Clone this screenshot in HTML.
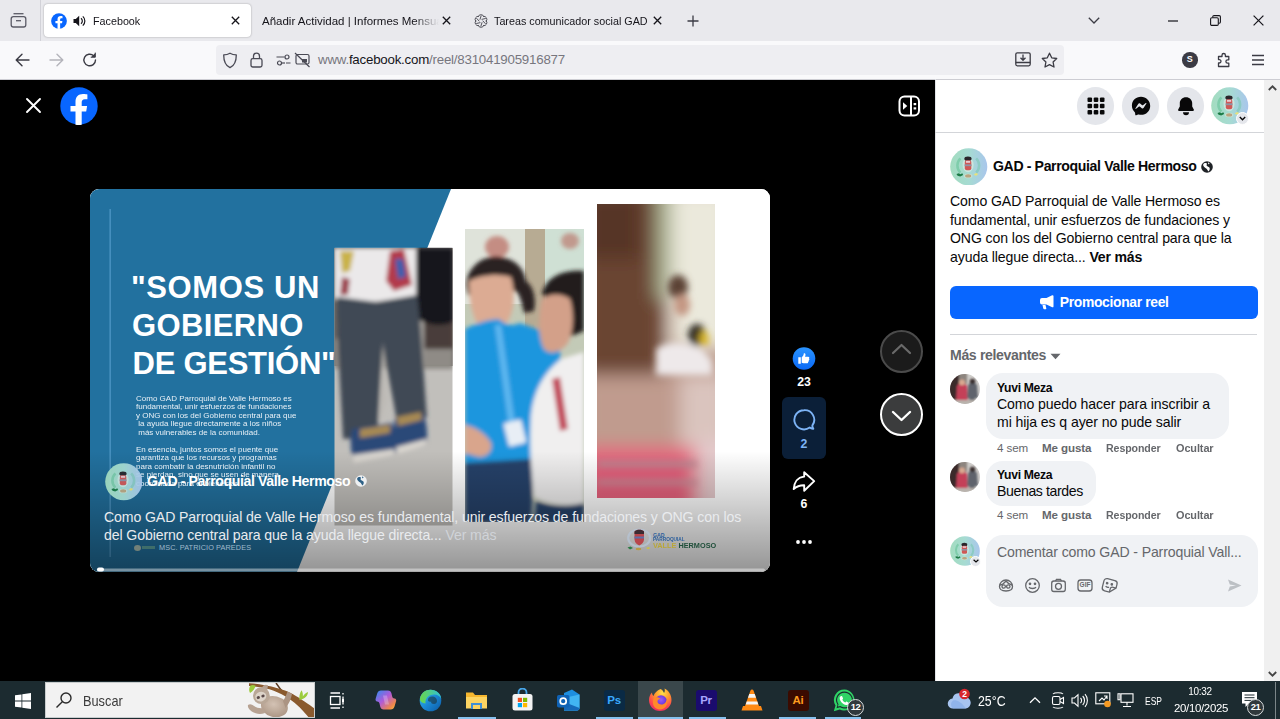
<!DOCTYPE html>
<html lang="es">
<head>
<meta charset="utf-8">
<title>Facebook</title>
<style>
*{box-sizing:border-box;margin:0;padding:0}
html,body{width:1280px;height:719px;overflow:hidden;background:#000;font-family:"Liberation Sans",sans-serif;}
.abs{position:absolute}
#root{position:relative;width:1280px;height:719px;overflow:hidden}
/* ---------- browser chrome ---------- */
#tabbar{left:0;top:0;width:1280px;height:41px;background:#e9e9ed}
#navbar{left:0;top:41px;width:1280px;height:38.600px;background:#f9f9fb;border-bottom:1px solid #cdcdd3}
.tab-active{left:44px;top:4px;width:207px;height:33px;background:#fff;border-radius:4px;box-shadow:0 0 2px rgba(0,0,0,.35)}
.tabtxt{font-size:11.500px;color:#15141a;white-space:nowrap;top:14px;line-height:14px;transform:scaleX(.935);transform-origin:0 0}
#urlbar{left:216px;top:45px;width:848px;height:29.600px;background:#eeeef2;border-radius:4px}
#urltxt{left:318px;top:52px;font-size:13.3px;line-height:16px;color:#77767e;white-space:nowrap;letter-spacing:-0.22px}
#urltxt b{font-weight:normal;color:#15141a}
/* ---------- content ---------- */
#stage{left:0;top:79.600px;width:935px;height:601.400px;background:#000}
#panel{left:935px;top:79.600px;width:329px;height:601.400px;background:#fff}
#scroll{left:1264px;top:79.600px;width:16px;height:601.400px;background:#f0f0f0}

/* ---------- stage ---------- */
.white{color:#fff}
#video{left:90px;top:189px;width:680px;height:383px;border-radius:9px;overflow:hidden;background:#fff}
.hl{font-weight:bold;color:#fff;font-size:31px;line-height:38px;white-space:nowrap}
.small{left:46px;color:#e8f0f6;font-size:7px;line-height:8.450px;white-space:nowrap;transform:scaleX(1.145);transform-origin:0 0}
.cap{left:14px;color:#e9ebee;font-size:14.1px;line-height:18px;white-space:nowrap;letter-spacing:-0.1px}
.cnt{font-size:12.3px;font-weight:bold;color:#fff;text-align:center;width:44px;line-height:14px}

/* ---------- panel ---------- */
.hbtn{width:37.500px;height:37.500px;border-radius:50%;background:#e4e6eb;top:87px}
.ava{border-radius:50%;background:radial-gradient(circle at 50% 42%,#7d5a5e 0 14%,#c9d9c4 16% 34%,#a8d3c0 36% 62%,#8cc3cf 64% 100%)}
.ptxt{left:950px;font-size:14.1px;line-height:18.700px;color:#080809;white-space:nowrap;letter-spacing:-0.1px}
.bub{background:#f0f2f5;border-radius:17px}
.cname{font-size:12.200px;font-weight:bold;color:#080809;white-space:nowrap;line-height:14px;letter-spacing:-0.34px}
.ctext{font-size:14.1px;color:#080809;white-space:nowrap;line-height:18px;letter-spacing:-0.1px}
.act{font-size:11.600px;color:#65676b;white-space:nowrap;line-height:14px;letter-spacing:-0.1px}
.act b{font-weight:bold}
.uava{width:30px;height:30px;border-radius:50%;left:950px;background:radial-gradient(circle at 40% 55%,#c63d54 0 16%,#8a7f78 18% 40%,#6b6a62 42% 70%,#9aa493 72% 100%)}
/* ---------- taskbar ---------- */
#taskbar{left:0;top:681px;width:1280px;height:38px;background:#1c2b30}

.tray{color:#fff;font-size:12px;line-height:14px;white-space:nowrap}
.ul{top:717px;height:2px;background:#86c1ee}
.appsq{width:21px;height:21px;border-radius:3px;top:689.500px;font-weight:bold;font-size:11.500px;line-height:21px;text-align:center;letter-spacing:-0.3px}
</style>
</head>
<body>
<div id="root">

<!-- ======= TAB BAR ======= -->
<div id="tabbar" class="abs"></div>
<div class="abs tab-active"></div>
<div class="abs" style="left:39.500px;top:0;width:1px;height:41px;background:#d2d2d8"></div>
<!-- firefox view icon -->
<svg class="abs" style="left:10px;top:12px" width="17" height="17" viewBox="0 0 17 17" fill="none" stroke="#5b5b66" stroke-width="1.300"><path d="M3.500 1.700h10"/><rect x="1.200" y="4.700" width="14.600" height="10.300" rx="2.200"/><path d="M6 8.700h5"/></svg>
<!-- fb favicon -->
<svg class="abs" style="left:51px;top:12.500px" width="16" height="16" viewBox="0 0 38 38"><circle cx="19" cy="19" r="18.700" fill="#0866ff"/><path d="M26.200 24.600l.9-5.600h-5.400v-3.700c0-1.500.8-3 3.200-3h2.500V7.500s-2.300-.4-4.400-.4c-4.500 0-7.500 2.700-7.500 7.700V19h-5v5.600h5v13.100a19 19 0 0 0 6.200 0V24.600z" fill="#fff"/></svg>
<!-- sound icon -->
<svg class="abs" style="left:73px;top:15px" width="13" height="12" viewBox="0 0 13 12"><path d="M.5 4h2.300L6.200.8v10.400L2.800 8H.5z" fill="#15141a"/><path d="M8 3.200a3.600 3.600 0 0 1 0 5.600M9.800 1.400a6.200 6.200 0 0 1 0 9.200" stroke="#15141a" stroke-width="1.200" fill="none"/></svg>
<!-- tab close x's -->
<svg class="abs" style="left:231px;top:16px" width="9" height="9" viewBox="0 0 9 9"><path d="M.8.800l7.400 7.400M8.200.8L.8 8.200" stroke="#15141a" stroke-width="1.300"/></svg>
<svg class="abs" style="left:442px;top:16px" width="9" height="9" viewBox="0 0 9 9"><path d="M.8.800l7.400 7.400M8.200.8L.8 8.200" stroke="#15141a" stroke-width="1.300"/></svg>
<svg class="abs" style="left:653px;top:16px" width="9" height="9" viewBox="0 0 9 9"><path d="M.8.800l7.400 7.400M8.200.8L.8 8.200" stroke="#15141a" stroke-width="1.300"/></svg>
<!-- chatgpt-like favicon -->
<svg class="abs" style="left:473.500px;top:13.500px" width="14" height="14" viewBox="-7 -7 14 14" fill="none" stroke="#55555d" stroke-width="1"><path d="M-2.90 -4.08A3.0 3.0 0 0 1 2.90 -4.08M0.58 -1.60L4.77 -2.54M2.08 -4.55A3.0 3.0 0 0 1 4.98 0.47M1.67 -0.30L4.58 2.86M4.98 -0.47A3.0 3.0 0 0 1 2.08 4.55M1.09 1.30L-0.19 5.40M2.90 4.08A3.0 3.0 0 0 1 -2.90 4.08M-0.58 1.60L-4.77 2.54M-2.08 4.55A3.0 3.0 0 0 1 -4.98 -0.47M-1.67 0.30L-4.58 -2.86M-4.98 0.47A3.0 3.0 0 0 1 -2.08 -4.55M-1.09 -1.30L0.19 -5.40"/></svg>
<!-- new tab + -->
<svg class="abs" style="left:687px;top:15px" width="12" height="12" viewBox="0 0 12 12"><path d="M6 .5v11M.5 6h11" stroke="#3b3b44" stroke-width="1.300"/></svg>
<!-- list all tabs chevron -->
<svg class="abs" style="left:1088px;top:17px" width="12" height="7" viewBox="0 0 12 7"><path d="M.8.800L6 6l5.200-5.200" stroke="#3b3b44" stroke-width="1.300" fill="none"/></svg>
<!-- window controls -->
<svg class="abs" style="left:1168px;top:20px" width="10" height="2" viewBox="0 0 10 2"><path d="M0 1h10" stroke="#15141a" stroke-width="1.200"/></svg>
<svg class="abs" style="left:1210px;top:15px" width="11" height="11" viewBox="0 0 11 11" fill="none" stroke="#15141a" stroke-width="1.100"><rect x=".6" y="2.700" width="7.700" height="7.700" rx="1.200"/><path d="M2.800 2.500V1.800a1.200 1.200 0 0 1 1.200-1.200h5.200a1.200 1.200 0 0 1 1.200 1.200V7a1.200 1.200 0 0 1-1.200 1.200h-.7"/></svg>
<svg class="abs" style="left:1253px;top:15px" width="11" height="11" viewBox="0 0 11 11"><path d="M.6.600l9.800 9.800M10.400.6L.6 10.400" stroke="#15141a" stroke-width="1.200"/></svg>
<div class="abs tabtxt" id="t1" style="left:93px">Facebook</div>
<div class="abs tabtxt" id="t2" style="left:262px;width:177px;overflow:hidden;transform:none;letter-spacing:0;-webkit-mask-image:linear-gradient(90deg,#000 0,#000 86%,transparent 100%);mask-image:linear-gradient(90deg,#000 0,#000 86%,transparent 100%)">Añadir Actividad | Informes Mensuales</div>
<div class="abs tabtxt" id="t3" style="left:494px;width:170px;overflow:hidden">Tareas comunicador social GAD</div>

<!-- ======= NAV BAR ======= -->
<div id="navbar" class="abs"></div>
<div id="urlbar" class="abs"></div>
<!-- back / forward / reload -->
<svg class="abs" style="left:15px;top:53px" width="15" height="14" viewBox="0 0 15 14" fill="none" stroke="#3b3b44" stroke-width="1.400" stroke-linecap="round" stroke-linejoin="round"><path d="M14 7H1.500M7 1.200L1.200 7 7 12.800"/></svg>
<svg class="abs" style="left:49px;top:53px" width="15" height="14" viewBox="0 0 15 14" fill="none" stroke="#b4b4bb" stroke-width="1.400" stroke-linecap="round" stroke-linejoin="round"><path d="M1 7h12.500M8 1.200L13.800 7 8 12.800"/></svg>
<svg class="abs" style="left:82px;top:52px" width="16" height="16" viewBox="0 0 16 16" fill="none" stroke="#3b3b44" stroke-width="1.400" stroke-linecap="round"><path d="M13.500 8a5.800 5.800 0 1 1-1.800-4.200"/><path d="M13.300 1v4.200H9.100" fill="#3b3b44" stroke-linejoin="round" stroke-width="1"/></svg>
<!-- shield, lock, permissions, pip -->
<svg class="abs" style="left:222px;top:52px" width="16" height="17" viewBox="0 0 16 17" fill="none" stroke="#4a4a55" stroke-width="1.300"><path d="M8 1.200c2 1.200 4 1.700 6.300 1.700 0 5.600-1.300 10.300-6.300 12.800C3 13.200 1.700 8.500 1.700 2.900 4 2.900 6 2.400 8 1.200z" stroke-linejoin="round"/></svg>
<svg class="abs" style="left:250px;top:52px" width="13" height="16" viewBox="0 0 13 16" fill="none" stroke="#4a4a55" stroke-width="1.300"><rect x="1" y="6.700" width="11" height="8.300" rx="1.800"/><path d="M3.500 6.700V4.200a3 3 0 0 1 6 0v2.500"/></svg>
<svg class="abs" style="left:276px;top:54px" width="15" height="12" viewBox="0 0 15 12" fill="none" stroke="#4a4a55" stroke-width="1.200"><path d="M.5 3h8M10 9h4.500"/><circle cx="11" cy="3" r="2"/><circle cx="3.500" cy="9" r="2"/><path d="M5.500 9H9" /></svg>
<svg class="abs" style="left:294px;top:52px" width="17" height="16" viewBox="0 0 17 16" fill="none" stroke="#4a4a55" stroke-width="1.200"><rect x="2" y="2.500" width="13" height="9.500" rx="1.500"/><rect x="8" y="7" width="5" height="3.500" fill="#4a4a55" stroke="none"/><path d="M1 1l14.500 14"/></svg>
<!-- right side: downloads-ish + star -->
<svg class="abs" style="left:1015px;top:52px" width="16" height="15" viewBox="0 0 16 15" fill="none" stroke="#3b3b44" stroke-width="1.300"><rect x=".8" y=".8" width="14.400" height="13" rx="1.500"/><path d="M.8 10.500h14.400M8 2.500v5.500M5.500 5.800L8 8.300l2.500-2.500" stroke-linejoin="round"/></svg>
<svg class="abs" style="left:1041px;top:51.500px" width="17" height="16" viewBox="0 0 17 16" fill="none" stroke="#3b3b44" stroke-width="1.300" stroke-linejoin="round"><path d="M8.500 1.200l2.200 4.600 5 .7-3.600 3.500.9 5-4.500-2.400L4 15l.9-5L1.300 6.500l5-.7z"/></svg>
<!-- account S, extensions, menu -->
<div class="abs" style="left:1182px;top:52px;width:15.500px;height:15.500px;border-radius:50%;background:#3b3b44"></div>
<div class="abs" style="left:1182px;top:52px;width:15.500px;height:15.500px;text-align:center;font-size:9px;line-height:15.500px;font-weight:bold;color:#fff">S</div>
<svg class="abs" style="left:1216px;top:52px" width="16" height="16" viewBox="0 0 16 16" fill="none" stroke="#3b3b44" stroke-width="1.300" stroke-linejoin="round"><path d="M6 3.200a1.700 1.700 0 0 1 3.400 0V4.500h3.400v3.300h-1.200a1.700 1.700 0 0 0 0 3.400h1.200v3.300H2.500V11h.8a1.700 1.700 0 0 0 0-3.400h-.8V4.500H6z"/></svg>
<svg class="abs" style="left:1252px;top:54px" width="12" height="12" viewBox="0 0 12 12"><path d="M0 1.500h12M0 6h12M0 10.500h12" stroke="#3b3b44" stroke-width="1.300"/></svg>
<div id="urltxt" class="abs">www.<b>facebook.com</b>/reel/831041905916877</div>

<!-- ======= STAGE ======= -->
<div id="stage" class="abs"></div>
<!-- close X -->
<svg class="abs" style="left:25px;top:97px" width="17" height="17" viewBox="0 0 17 17"><path d="M2 2 L15 15 M15 2 L2 15" stroke="#fff" stroke-width="1.9" stroke-linecap="round"/></svg>
<!-- facebook logo -->
<svg class="abs" style="left:60px;top:87px" width="38" height="38" viewBox="0 0 38 38"><circle cx="19" cy="19" r="18.7" fill="#0866ff"/><path d="M26.2 24.6l.9-5.6h-5.4v-3.7c0-1.5.8-3 3.200-3h2.500V7.500s-2.300-.4-4.400-.4c-4.500 0-7.500 2.700-7.500 7.700V19h-5v5.600h5v13.100a19 19 0 0 0 6.200 0V24.600z" fill="#fff"/></svg>
<!-- side toggle icon -->
<svg class="abs" style="left:898px;top:95px" width="22" height="22" viewBox="0 0 22 22"><rect x="1.500" y="1.500" width="19.500" height="19" rx="5" fill="none" stroke="#fff" stroke-width="2"/><path d="M13 1.500v19" stroke="#fff" stroke-width="2"/><path d="M5 7.300l4.300 3.700-4.300 3.700z" fill="#fff"/><rect x="15.600" y="8" width="2.600" height="2.200" fill="#fff"/><rect x="15.600" y="12.300" width="2.600" height="2.200" fill="#fff"/></svg>

<!-- ======= VIDEO ======= -->
<div id="video" class="abs">
  <svg class="abs" style="left:0;top:0" width="680" height="383" viewBox="0 0 680 383">
    <defs>
      <filter id="b1" x="-20%" y="-20%" width="140%" height="140%"><feGaussianBlur stdDeviation=".5"/></filter>
      <filter id="b2" x="-20%" y="-20%" width="140%" height="140%"><feGaussianBlur stdDeviation="2"/></filter>
      <filter id="b4" x="-20%" y="-20%" width="140%" height="140%"><feGaussianBlur stdDeviation="3.500"/></filter>
      <filter id="b5" x="-20%" y="-20%" width="140%" height="140%"><feGaussianBlur stdDeviation="5"/></filter>
      <filter id="b9" x="-30%" y="-30%" width="160%" height="160%"><feGaussianBlur stdDeviation="9"/></filter>
      <clipPath id="c1"><rect x="244.500" y="58.500" width="118" height="278"/></clipPath>
      <clipPath id="c2"><rect x="375" y="40" width="119" height="293"/></clipPath>
      <clipPath id="c3"><rect x="507" y="15" width="118" height="294"/></clipPath>
      <linearGradient id="shade" x1="0" y1="0" x2="0" y2="1"><stop offset="0" stop-color="#000" stop-opacity="0"/><stop offset="1" stop-color="#000" stop-opacity=".42"/></linearGradient>
    </defs>
    <rect width="680" height="383" fill="#fff"/>
    <polygon points="0,0 361,0 207,383 0,383" fill="#22719f"/>
    <rect x="19.500" y="20" width="1.300" height="348" fill="#4f97c6"/>
    <!-- photo 1 : child legs -->
    <g clip-path="url(#c1)">
      <rect x="244" y="59" width="119" height="278" fill="#c1bfbb"/>
      <rect x="244" y="59" width="119" height="118" fill="#6d6661"/>
      <g filter="url(#b2)">
        <rect x="244" y="150" width="119" height="30" fill="#8f8b86"/>
        <rect x="318" y="108" width="16" height="72" fill="#a5a19c"/>
        <rect x="334" y="120" width="29" height="40" fill="#4a3c3a"/>
        <path d="M322 59h41v74c-14 6-30 2-38-6z" fill="#17181c"/>
        <path d="M244 59h82v48l-42 6-40-3z" fill="#ebe9ea"/>
        <path d="M300 62l14-2 8 36-18 6-8-10z" fill="#b23a4c"/>
        <path d="M305 70l8 0 3 18-8 2z" fill="#3a5fae"/>
        <path d="M250 62l14 0-4 20-8 2z" fill="#c9b24a"/>
        <path d="M252 88l8 2-2 16-8 0z" fill="#9c3f4c"/>
        <path d="M247 108l40 5 40-7c4 30 6 70 10 122l-30 6c-4-26-10-52-14-76-3 30-4 62-6 90l-34 2c-2-46-6-92-6-142z" fill="#414955"/>
        <path d="M293 152l4 60-8 24z" fill="#bdbab5"/>
        <path d="M262 240l40-6c4 10 4 22 2 32l-40 6c-4-10-4-22-2-32z" fill="#2b4878"/>
        <path d="M305 230l28-6c4 10 5 22 3 32l-30 8c-3-10-3-22-1-34z" fill="#2b4878"/>
        <path d="M270 240l30-4 0 8-30 5zM307 228l24-5 1 8-24 6z" fill="#a88a52"/>
        <path d="M262 266l42-6 0 6-40 8zM306 258l30-8 0 6-29 9z" fill="#d9d5cf"/>
      </g>
    </g>
    <!-- photo 2 : two women -->
    <g clip-path="url(#c2)">
      <rect x="375" y="40" width="119" height="294" fill="#c3cab7"/>
      <rect x="375" y="40" width="60" height="75" fill="#dfe3da"/>
      <rect x="435" y="40" width="20" height="120" fill="#b7ab93"/>
      <rect x="455" y="40" width="39" height="100" fill="#cfe0d4"/>
      <g filter="url(#b2)">
        <ellipse cx="407" cy="58" rx="12" ry="11" fill="#b86a5e" opacity=".7"/>
        <ellipse cx="480" cy="52" rx="9" ry="8" fill="#b86a5e" opacity=".6"/>
        <path d="M376 96c2-20 18-30 34-28 16 2 24 12 26 24 8 6 10 18 8 30l-10 2c-2-10-4-18-8-22l-48 4z" fill="#2a2122"/>
        <path d="M379 92c10-6 30-8 42-4 4 14 4 30-2 42-6 10-16 14-24 12-10-4-16-24-16-50z" fill="#dcab93"/>
        <path d="M375 140c12-6 24-10 34-10 6 6 14 8 20 4 14 4 28 10 40 18 4 30 2 80-6 122l-88 6z" fill="#1b96de"/>
        <path d="M405 136l6 0 14 100-6 2z" fill="#5fb8f0"/>
        <rect x="416" y="232" width="18" height="24" rx="2" fill="#e8eef5" transform="rotate(-14 425 244)"/>
        <path d="M375 236c10 2 20 8 26 18 2 8-4 14-12 14l-14-4z" fill="#d9a58c"/>
        <path d="M375 274l66-4c2 20 2 44 0 64h-66z" fill="#25426b"/>
        <path d="M452 104c4-14 18-24 42-22v60l-20 8z" fill="#241f1e"/>
        <path d="M452 110c8-6 20-6 28 0 4 14 4 30-2 44-8 10-18 12-24 6-6-12-6-32-2-50z" fill="#d3a089"/>
        <path d="M441 226c2-22 12-42 30-56l23-7v151c-16 4-36 2-50-6-3-28-5-55-3-82z" fill="#f0efef"/>
        <path d="M462 190l8-2 8 52-8 2z" fill="#c24b5c"/>
        <path d="M446 312c16 6 34 6 48 2v20h-50z" fill="#25426b"/>
      </g>
    </g>
    <!-- photo 3 : blurred -->
    <g clip-path="url(#c3)">
      <rect x="507" y="15" width="118" height="294" fill="#bb9a8c"/>
      <g filter="url(#b9)">
        <rect x="490" y="0" width="84" height="200" fill="#6b4433"/>
        <rect x="490" y="0" width="60" height="70" fill="#573628"/>
        <rect x="566" y="0" width="20" height="110" fill="#a9b08f"/>
        <rect x="582" y="0" width="60" height="160" fill="#ebe9dc"/>
        <rect x="490" y="186" width="150" height="80" fill="#c09b8e"/>
        <rect x="590" y="186" width="50" height="80" fill="#dac4be"/>
        <rect x="490" y="258" width="150" height="70" fill="#e5607b"/>
        <rect x="606" y="250" width="40" height="80" fill="#e3c9cb"/>
      </g>
      <g filter="url(#b4)">
        <ellipse cx="588" cy="98" rx="10" ry="12" fill="#5b4234"/>
        <ellipse cx="592" cy="116" rx="8" ry="11" fill="#c49783"/>
        <ellipse cx="607" cy="146" rx="9" ry="11" fill="#2f2a22"/>
        <ellipse cx="614" cy="150" rx="5" ry="8" fill="#d8b62c"/>
        <path d="M566 160c10-8 30-8 46 0l10 12v14h-56z" fill="#eee9ea"/>
        <rect x="507" y="272" width="100" height="6" fill="#b98a93"/>
        <rect x="507" y="291" width="100" height="5" fill="#c58e98"/>
      </g>
    </g>
    <!-- bottom shade -->
    <rect x="0" y="262" width="680" height="121" fill="url(#shade)"/>
    <!-- gad logo bottom right -->
    <g filter="url(#b1)"><ellipse cx="549.200" cy="349" rx="11" ry="8.500" fill="none" stroke="#b5c3d3" stroke-width="2.200" opacity=".8"/><path d="M544.500 342.500c2-2.500 7.500-2.500 9.500 0v8c0 3-2.500 5-4.800 6-2.300-1-4.700-3-4.700-6z" fill="#b8444c"/><path d="M544.500 342.500c2-2.500 7.500-2.500 9.500 0v2.500h-9.500z" fill="#3a2a30"/><rect x="544.500" y="347.500" width="9.500" height="2" fill="#5a6fa8"/><path d="M537.500 358.500l3-1 2.500 1.500-3 1.500z" fill="#2c7a45"/><ellipse cx="548.500" cy="360" rx="2.800" ry="1.300" fill="#b89a45"/><path d="M556 359l2.500-1 2 1-2.500 1.200z" fill="#c9c04a"/></g>
    <!-- progress -->
    <rect x="7" y="379.500" width="668" height="3" rx="1.500" fill="#fff" opacity=".42"/>
    <rect x="7" y="378.500" width="7" height="4" rx="2" fill="#fff"/>
  </svg>
  <div class="abs hl" id="h1" style="left:41px;top:79.500px;letter-spacing:.6px">"SOMOS UN</div>
  <div class="abs hl" id="h2" style="left:42px;top:117.500px;letter-spacing:.38px">GOBIERNO</div>
  <div class="abs hl" id="h3" style="left:42.500px;top:156px;letter-spacing:-.26px">DE GESTIÓN"</div>
  <div class="abs small" style="top:206px">Como GAD Parroquial de Valle Hermoso es<br>fundamental, unir esfuerzos de fundaciones<br>y ONG con los del Gobierno central para que<br>&nbsp;la ayuda llegue directamente a los niños<br>&nbsp;más vulnerables de la comunidad.</div>
  <div class="abs small" style="top:257px">En esencia, juntos somos el puente que<br>garantiza que los recursos y programas<br>para combatir la desnutrición infantil no<br>se pierdan, sino que se usen de manera<br>coordinada para el bienestar</div>
  <div class="abs" style="left:44px;top:355.500px;width:7px;height:6px;border-radius:50%;background:#8b8f7c;opacity:.8"></div><div class="abs" style="left:52px;top:357px;width:13px;height:3px;background:#5f8a6a;opacity:.55"></div>
  <div class="abs" style="left:69px;top:354px;font-size:7.3px;color:#9fb9cb;white-space:nowrap;letter-spacing:.1px">MSC. PATRICIO PAREDES</div>
  <div class="abs" id="lg1" style="left:563px;top:343.900px;font-size:5.200px;line-height:4.600px;font-weight:bold;color:#2c5f9c;white-space:nowrap;transform-origin:0 0"><span id="lg1a">GAD</span><br><span id="lg1b" style="display:inline-block;transform:scaleX(.92);transform-origin:0 0">PARROQUIAL</span></div>
  <div class="abs" id="lg2" style="left:563px;top:352.500px;font-size:6.800px;line-height:8px;font-weight:bold;color:#1f4f3a;white-space:nowrap;transform-origin:0 0;transform:scaleX(1.075)"><span style="color:#b9a738">VALLE</span> HERMOSO</div>
  <!-- overlay author -->
  <svg class="abs" style="left:14.5px;top:274px;opacity:.93" width="37.5" height="37.5" viewBox="0 0 38 38"><defs><linearGradient id="gdg" x1="0" y1="0" x2="1" y2="0"><stop offset="0" stop-color="#a3dcbf"/><stop offset=".5" stop-color="#a6dbd2"/><stop offset="1" stop-color="#a9c6ec"/></linearGradient><filter id="gdf"><feGaussianBlur stdDeviation=".45"/></filter></defs><circle cx="19" cy="19" r="18.800" fill="url(#gdg)"/><g filter="url(#gdf)"><path d="M10.500 10.500c-4 4-4 10.500 0 14.500" stroke="#7fcdab" stroke-width="2.600" fill="none"/><path d="M26.500 10.500c4 4 4 10.500 0 14.500" stroke="#8ccbc4" stroke-width="2.600" fill="none"/><ellipse cx="18.300" cy="17" rx="5.600" ry="7.600" fill="#d5ebe3" opacity=".75"/><ellipse cx="18.200" cy="11" rx="3.700" ry="2.300" fill="#2b2529"/><rect x="15" y="12.300" width="6.600" height="10.200" rx="2" fill="#cf5957"/><rect x="14.800" y="16.600" width="7" height="1.800" fill="#8f93a6"/><rect x="16.200" y="13" width="4.200" height="2" fill="#e9c9cf"/><path d="M6.500 26.300l2.500-.8 1.500 1 2-1 .8 1.800-3 1.500-2.600-.8z" fill="#1c7a45"/><ellipse cx="18.400" cy="28.300" rx="3.100" ry="1.600" fill="#8d6d3c"/><ellipse cx="18.400" cy="28.300" rx="4.300" ry="2.300" fill="#efe9d2" opacity=".45"/><path d="M24 27l2.300-1.600 2.400 1-2.200 1.700z" fill="#e8e27a"/></g></svg>
  <div class="abs" style="left:57px;top:284px;font-size:14.1px;line-height:17px;font-weight:bold;color:#fff;white-space:nowrap;letter-spacing:-0.38px" id="ovname">GAD - Parroquial Valle Hermoso</div>
  <svg class="abs" style="left:265px;top:286px" width="12" height="12" viewBox="0 0 12 12"><circle cx="6" cy="6" r="5.800" fill="#eef0f2"/><path d="M2.200 3.200C3 1.800 5 1.600 5.800 2.400 6.200 3 5.400 3.600 5.600 4.400 5.800 5.200 7.600 5.400 8.400 6.400 9.200 7.600 8.600 9.400 7.600 10.400 7 10 6.600 9 6 8.200 5.200 7.200 3.600 6.800 2.800 5.600 2.200 4.800 2 4 2.200 3.200zM7 1.300C7.500 1.900 7.300 2.600 6.800 3.100 7.600 3.300 8.300 2.900 8.600 2.200z" fill="#2e6186"/></svg>
  <div class="abs cap" style="top:319px" id="cap1">Como GAD Parroquial de Valle Hermoso es fundamental, unir esfuerzos de fundaciones y ONG con los</div>
  <div class="abs cap" style="top:337px" id="cap2">del Gobierno central para que la ayuda llegue directa... <span style="color:#d0d3d8">Ver más</span></div>
</div>

<!-- like -->
<svg class="abs" style="left:792px;top:347px" width="24" height="24" viewBox="0 0 24 24"><defs><linearGradient id="lk" x1="0" y1="0" x2="0" y2="1"><stop offset="0" stop-color="#2a94ff"/><stop offset="1" stop-color="#0a68f5"/></linearGradient></defs><circle cx="12" cy="11.500" r="11.300" fill="url(#lk)"/><path d="M6.300 10.300h2.500v6.400H6.300zM9.700 10.300c1.200-.8 1.900-2.100 2.100-3.700.1-.8 1.600-.6 1.700.8 0 .9-.2 1.700-.5 2.400h3.200c1.200 0 1.500 1.300.8 1.800.6.500.4 1.500-.3 1.700.4.600.1 1.400-.6 1.600.2.700-.3 1.300-1.100 1.300h-3.500c-.7 0-1.300-.2-1.800-.5z" fill="#fff"/></svg>
<div class="abs cnt" style="left:782px;top:375px">23</div>
<!-- comment (selected) -->
<div class="abs" style="left:782px;top:397px;width:44px;height:62px;border-radius:6px;background:#0b1f38"></div>
<svg class="abs" style="left:792px;top:408px" width="24" height="24" viewBox="0 0 24 24"><path d="M12 2.200a9.600 9.600 0 1 0 5.700 17.300c1 .9 2.200 1.300 3.600 1.200-.8-1-1.100-2.100-.9-3.300A9.600 9.600 0 0 0 12 2.200z" fill="none" stroke="#7db3f5" stroke-width="1.900" stroke-linejoin="round"/></svg>
<div class="abs cnt" style="left:782px;top:436.500px;color:#7db3f5">2</div>
<!-- share -->
<svg class="abs" style="left:791px;top:469px" width="26" height="26" viewBox="0 0 26 26"><path d="M13.200 3.200L23.200 12.100 13.200 21.800V16.300C9 16.200 5.600 17.400 2.700 20.100 3.100 13.600 6.500 8.200 13.200 7.600z" fill="none" stroke="#fff" stroke-width="1.900" stroke-linejoin="round"/></svg>
<div class="abs cnt" style="left:782px;top:497px">6</div>
<!-- dots -->
<svg class="abs" style="left:794px;top:538px" width="20" height="8" viewBox="0 0 20 8"><circle cx="4" cy="4" r="1.900" fill="#fff"/><circle cx="10" cy="4" r="1.900" fill="#fff"/><circle cx="16" cy="4" r="1.900" fill="#fff"/></svg>
<!-- up / down -->
<div class="abs" style="left:880px;top:330px;width:43px;height:43px;border-radius:50%;background:#1b1b1b;border:2px solid #4b4b4b"></div>
<svg class="abs" style="left:890px;top:341px" width="23" height="16" viewBox="0 0 23 16"><path d="M3 12l8.500-8 8.500 8" fill="none" stroke="#6a6a6a" stroke-width="2.200" stroke-linecap="round" stroke-linejoin="round"/></svg>
<div class="abs" style="left:880px;top:393px;width:43px;height:43px;border-radius:50%;background:#3b3c3d;border:2.500px solid #fff"></div>
<svg class="abs" style="left:890px;top:408px" width="23" height="16" viewBox="0 0 23 16"><path d="M3 4l8.500 8 8.500-8" fill="none" stroke="#fff" stroke-width="2.400" stroke-linecap="round" stroke-linejoin="round"/></svg>

<!-- ======= RIGHT PANEL ======= -->
<div id="panel" class="abs"></div>
<div class="abs" style="left:935px;top:79px;width:1px;height:602px;background:#e2e4e8"></div>
<!-- header buttons -->
<div class="abs hbtn" style="left:1076.600px"></div>
<svg class="abs" style="left:1086.500px;top:97px" width="18" height="18" viewBox="0 0 18 18" fill="#080809"><rect x="0.500" y="0.500" width="4.600" height="4.600" rx="1.100"/><rect x="6.700" y="0.500" width="4.600" height="4.600" rx="1.100"/><rect x="12.900" y="0.500" width="4.600" height="4.600" rx="1.100"/><rect x="0.500" y="6.700" width="4.600" height="4.600" rx="1.100"/><rect x="6.700" y="6.700" width="4.600" height="4.600" rx="1.100"/><rect x="12.900" y="6.700" width="4.600" height="4.600" rx="1.100"/><rect x="0.500" y="12.900" width="4.600" height="4.600" rx="1.100"/><rect x="6.700" y="12.900" width="4.600" height="4.600" rx="1.100"/><rect x="12.900" y="12.900" width="4.600" height="4.600" rx="1.100"/></svg>
<div class="abs hbtn" style="left:1121.600px"></div>
<svg class="abs" style="left:1130.500px;top:96px" width="20" height="20" viewBox="0 0 20 20"><path d="M10 .8C4.800.8.900 4.600.900 9.600c0 2.700 1.100 5 2.900 6.600.3.300.3.500.3.800l.1 1.600c0 .6.600 1 1.100.7l1.800-.8c.2-.1.500-.1.700 0 .7.200 1.500.3 2.300.3 5.100 0 9.100-3.800 9.100-8.900S15.100.8 10 .8z" fill="#080809"/><path d="M4.500 12.200l2.700-4.200c.4-.7 1.300-.8 1.900-.4l2.100 1.600c.2.100.5.100.7 0l2.900-2.200c.4-.3.900.2.600.6l-2.700 4.200c-.4.700-1.300.8-1.900.4l-2.100-1.600c-.2-.1-.5-.1-.7 0l-2.900 2.200c-.4.300-.9-.2-.6-.6z" fill="#e4e6eb"/></svg>
<div class="abs hbtn" style="left:1166.600px"></div>
<svg class="abs" style="left:1175.500px;top:96px" width="20" height="20" viewBox="0 0 20 20" fill="#080809"><path d="M10 1.200c-3.600 0-6.200 2.600-6.200 6.100v3.200l-1.600 3c-.4.700.1 1.500.9 1.500h13.800c.8 0 1.300-.8.900-1.500l-1.600-3V7.300c0-3.500-2.600-6.100-6.200-6.100z"/><path d="M7 16.200a3 3 0 0 0 6 0z"/></svg>
<svg class="abs" style="left:1211.3px;top:87px" width="37.5" height="37.5" viewBox="0 0 38 38"><defs><linearGradient id="gag" x1="0" y1="0" x2="1" y2="0"><stop offset="0" stop-color="#a3dcbf"/><stop offset=".5" stop-color="#a6dbd2"/><stop offset="1" stop-color="#a9c6ec"/></linearGradient><filter id="gaf"><feGaussianBlur stdDeviation=".45"/></filter></defs><circle cx="19" cy="19" r="18.800" fill="url(#gag)"/><g filter="url(#gaf)"><path d="M10.500 10.500c-4 4-4 10.500 0 14.500" stroke="#7fcdab" stroke-width="2.600" fill="none"/><path d="M26.500 10.500c4 4 4 10.500 0 14.500" stroke="#8ccbc4" stroke-width="2.600" fill="none"/><ellipse cx="18.300" cy="17" rx="5.600" ry="7.600" fill="#d5ebe3" opacity=".75"/><ellipse cx="18.200" cy="11" rx="3.700" ry="2.300" fill="#2b2529"/><rect x="15" y="12.300" width="6.600" height="10.200" rx="2" fill="#cf5957"/><rect x="14.800" y="16.600" width="7" height="1.800" fill="#8f93a6"/><rect x="16.200" y="13" width="4.200" height="2" fill="#e9c9cf"/><path d="M6.500 26.300l2.500-.8 1.500 1 2-1 .8 1.800-3 1.500-2.600-.8z" fill="#1c7a45"/><ellipse cx="18.400" cy="28.300" rx="3.100" ry="1.600" fill="#8d6d3c"/><ellipse cx="18.400" cy="28.300" rx="4.300" ry="2.300" fill="#efe9d2" opacity=".45"/><path d="M24 27l2.300-1.600 2.400 1-2.200 1.700z" fill="#e8e27a"/></g></svg>
<div class="abs" style="left:1236px;top:112px;width:13px;height:13px;border-radius:50%;background:#e4e6eb;border:1px solid #fff"></div>
<svg class="abs" style="left:1239px;top:116px" width="7" height="5" viewBox="0 0 7 5"><path d="M.8 1l2.700 2.700L6.200 1" stroke="#080809" stroke-width="1.400" fill="none"/></svg>
<div class="abs" style="left:935px;top:131.500px;width:330px;height:1px;background:#d3d5d9"></div>

<!-- author -->
<svg class="abs" style="left:950.3px;top:147.8px" width="37.5" height="37.5" viewBox="0 0 38 38"><defs><linearGradient id="gbg" x1="0" y1="0" x2="1" y2="0"><stop offset="0" stop-color="#a3dcbf"/><stop offset=".5" stop-color="#a6dbd2"/><stop offset="1" stop-color="#a9c6ec"/></linearGradient><filter id="gbf"><feGaussianBlur stdDeviation=".45"/></filter></defs><circle cx="19" cy="19" r="18.800" fill="url(#gbg)"/><g filter="url(#gbf)"><path d="M10.500 10.500c-4 4-4 10.500 0 14.500" stroke="#7fcdab" stroke-width="2.600" fill="none"/><path d="M26.500 10.500c4 4 4 10.500 0 14.500" stroke="#8ccbc4" stroke-width="2.600" fill="none"/><ellipse cx="18.300" cy="17" rx="5.600" ry="7.600" fill="#d5ebe3" opacity=".75"/><ellipse cx="18.200" cy="11" rx="3.700" ry="2.300" fill="#2b2529"/><rect x="15" y="12.300" width="6.600" height="10.200" rx="2" fill="#cf5957"/><rect x="14.800" y="16.600" width="7" height="1.800" fill="#8f93a6"/><rect x="16.200" y="13" width="4.200" height="2" fill="#e9c9cf"/><path d="M6.500 26.300l2.500-.8 1.500 1 2-1 .8 1.800-3 1.500-2.600-.8z" fill="#1c7a45"/><ellipse cx="18.400" cy="28.300" rx="3.100" ry="1.600" fill="#8d6d3c"/><ellipse cx="18.400" cy="28.300" rx="4.300" ry="2.300" fill="#efe9d2" opacity=".45"/><path d="M24 27l2.300-1.600 2.400 1-2.200 1.700z" fill="#e8e27a"/></g></svg>
<div class="abs" id="pname" style="left:993px;top:157px;font-size:14.100px;font-weight:bold;color:#080809;white-space:nowrap;line-height:18px;letter-spacing:-0.37px">GAD - Parroquial Valle Hermoso</div>
<svg class="abs" style="left:1201px;top:160.500px" width="12" height="12" viewBox="0 0 12 12"><circle cx="6" cy="6" r="5.800" fill="#1f2226"/><path d="M2.200 3.200C3 1.800 5 1.600 5.800 2.400 6.200 3 5.400 3.600 5.600 4.400 5.800 5.200 7.600 5.400 8.400 6.400 9.200 7.600 8.600 9.400 7.600 10.400 7 10 6.600 9 6 8.200 5.200 7.200 3.600 6.800 2.800 5.600 2.200 4.800 2 4 2.200 3.200zM7 1.300C7.500 1.900 7.300 2.600 6.800 3.100 7.600 3.300 8.300 2.900 8.600 2.200z" fill="#fff"/></svg>
<div class="abs ptxt" style="top:192px"><span id="pl1">Como GAD Parroquial de Valle Hermoso es</span><br><span id="pl2">fundamental, unir esfuerzos de fundaciones y</span><br><span id="pl3">ONG con los del Gobierno central para que la</span><br><span id="pl4">ayuda llegue directa... <b style="letter-spacing:-0.2px">Ver más</b></span></div>

<!-- promote button -->
<div class="abs" style="left:950px;top:285.500px;width:307.500px;height:33.500px;border-radius:6px;background:#0866ff"></div>
<svg class="abs" style="left:1039px;top:294px" width="16" height="16" viewBox="0 0 16 16" fill="#fff"><path d="M13.200 1.300c.6-.3 1.300.1 1.300.8v10.300c0 .7-.7 1.100-1.300.8L7.500 10.500H3A2 2 0 0 1 1 8.500v-2.500a2 2 0 0 1 2-2h4.500z"/><path d="M3.500 11h3l.8 3.200c.1.600-.3 1.100-.9 1.100H5.300c-.5 0-.9-.3-1-.8z"/></svg>
<div class="abs" id="promo" style="left:1059.800px;top:293px;font-size:13.900px;font-weight:bold;color:#fff;white-space:nowrap;line-height:18px;letter-spacing:-0.34px">Promocionar reel</div>
<div class="abs" style="left:950px;top:333.500px;width:307px;height:1px;background:#d3d5d9"></div>

<!-- sort -->
<div class="abs" id="sort" style="left:950px;top:346px;font-size:14.100px;font-weight:bold;color:#65676b;white-space:nowrap;line-height:18px;letter-spacing:-0.36px">Más relevantes</div>
<svg class="abs" style="left:1050px;top:353px" width="11" height="7" viewBox="0 0 11 7"><path d="M.5.800h10L5.500 6.200z" fill="#65676b"/></svg>

<!-- comment 1 -->
<svg class="abs" style="left:950px;top:374.300px" width="30" height="30" viewBox="0 0 30 30"><defs><clipPath id="ua1"><circle cx="15" cy="15" r="15"/></clipPath><filter id="ua1f"><feGaussianBlur stdDeviation=".8"/></filter></defs><g clip-path="url(#ua1)"><rect width="30" height="30" fill="#cfcdca"/><g filter="url(#ua1f)"><rect x="-2" y="-2" width="11" height="34" fill="#3b2c2b"/><rect x="9" y="-2" width="8" height="12" fill="#8d857f"/><path d="M7 12c2-4 8-4 10 0l1 16H6z" fill="#c43f59"/><circle cx="12" cy="8.500" r="3" fill="#d9a890"/><path d="M18 11c2-3 7-3 9 0l1 13h-3l-1 5h-4l-1-5h-2z" fill="#5e636c"/><circle cx="22.500" cy="7.500" r="2.800" fill="#3a3231"/><rect x="-2" y="26" width="34" height="6" fill="#b9b3ad"/></g></g></svg>
<div class="abs bub" style="left:986px;top:372.500px;width:243px;height:66px"></div>
<div class="abs cname" id="n1" style="left:997px;top:381px">Yuvi Meza</div>
<div class="abs ctext" id="c1a" style="left:997px;top:395px">Como puedo hacer para inscribir a</div>
<div class="abs ctext" id="c1b" style="left:997px;top:413px">mi hija es q ayer no pude salir</div>
<div class="abs act" style="left:997px;top:441px">4 sem</div>
<div class="abs act" style="left:1042px;top:441px"><b>Me gusta</b></div>
<div class="abs act" style="left:1106px;top:441px"><b style="display:inline-block;transform:scaleX(.915);transform-origin:0 0">Responder</b></div>
<div class="abs act" style="left:1176px;top:441px"><b style="display:inline-block;transform:scaleX(.94);transform-origin:0 0">Ocultar</b></div>
<!-- comment 2 -->
<svg class="abs" style="left:950px;top:461.500px" width="30" height="30" viewBox="0 0 30 30"><defs><clipPath id="ua2"><circle cx="15" cy="15" r="15"/></clipPath><filter id="ua2f"><feGaussianBlur stdDeviation=".8"/></filter></defs><g clip-path="url(#ua2)"><rect width="30" height="30" fill="#cfcdca"/><g filter="url(#ua2f)"><rect x="-2" y="-2" width="11" height="34" fill="#3b2c2b"/><rect x="9" y="-2" width="8" height="12" fill="#8d857f"/><path d="M7 12c2-4 8-4 10 0l1 16H6z" fill="#c43f59"/><circle cx="12" cy="8.500" r="3" fill="#d9a890"/><path d="M18 11c2-3 7-3 9 0l1 13h-3l-1 5h-4l-1-5h-2z" fill="#5e636c"/><circle cx="22.500" cy="7.500" r="2.800" fill="#3a3231"/><rect x="-2" y="26" width="34" height="6" fill="#b9b3ad"/></g></g></svg>
<div class="abs bub" style="left:986px;top:460.500px;width:109.500px;height:45px"></div>
<div class="abs cname" style="left:997px;top:468px">Yuvi Meza</div>
<div class="abs ctext" id="c2a" style="left:997px;top:481.500px;letter-spacing:-0.38px">Buenas tardes</div>
<div class="abs act" style="left:997px;top:508px">4 sem</div>
<div class="abs act" style="left:1042px;top:508px"><b>Me gusta</b></div>
<div class="abs act" style="left:1106px;top:508px"><b style="display:inline-block;transform:scaleX(.915);transform-origin:0 0">Responder</b></div>
<div class="abs act" style="left:1176px;top:508px"><b style="display:inline-block;transform:scaleX(.94);transform-origin:0 0">Ocultar</b></div>

<!-- composer -->
<svg class="abs" style="left:950px;top:535.5px" width="30" height="30" viewBox="0 0 38 38"><defs><linearGradient id="gcg" x1="0" y1="0" x2="1" y2="0"><stop offset="0" stop-color="#a3dcbf"/><stop offset=".5" stop-color="#a6dbd2"/><stop offset="1" stop-color="#a9c6ec"/></linearGradient><filter id="gcf"><feGaussianBlur stdDeviation=".45"/></filter></defs><circle cx="19" cy="19" r="18.800" fill="url(#gcg)"/><g filter="url(#gcf)"><path d="M10.500 10.500c-4 4-4 10.500 0 14.500" stroke="#7fcdab" stroke-width="2.600" fill="none"/><path d="M26.500 10.500c4 4 4 10.500 0 14.500" stroke="#8ccbc4" stroke-width="2.600" fill="none"/><ellipse cx="18.300" cy="17" rx="5.600" ry="7.600" fill="#d5ebe3" opacity=".75"/><ellipse cx="18.200" cy="11" rx="3.700" ry="2.300" fill="#2b2529"/><rect x="15" y="12.300" width="6.600" height="10.200" rx="2" fill="#cf5957"/><rect x="14.800" y="16.600" width="7" height="1.800" fill="#8f93a6"/><rect x="16.200" y="13" width="4.200" height="2" fill="#e9c9cf"/><path d="M6.500 26.300l2.500-.8 1.500 1 2-1 .8 1.800-3 1.500-2.600-.8z" fill="#1c7a45"/><ellipse cx="18.400" cy="28.300" rx="3.100" ry="1.600" fill="#8d6d3c"/><ellipse cx="18.400" cy="28.300" rx="4.300" ry="2.300" fill="#efe9d2" opacity=".45"/><path d="M24 27l2.300-1.600 2.400 1-2.200 1.700z" fill="#e8e27a"/></g></svg>
<div class="abs" style="left:970px;top:555.500px;width:11px;height:11px;border-radius:50%;background:#e4e6eb;border:1px solid #fff"></div>
<svg class="abs" style="left:972.500px;top:559px" width="6" height="4" viewBox="0 0 6 4"><path d="M.6.700l2.400 2.300L5.400.7" stroke="#080809" stroke-width="1.200" fill="none"/></svg>
<div class="abs bub" style="left:986px;top:534.500px;width:271.500px;height:72.500px"></div>
<div class="abs" id="ph" style="left:997px;top:542.500px;font-size:14.1px;color:#65676b;white-space:nowrap;line-height:18px;letter-spacing:-0.13px">Comentar como GAD - Parroquial Vall...</div>
<svg class="abs" style="left:998px;top:577px" width="122" height="17" viewBox="0 0 122 17" fill="none" stroke="#65676b" stroke-width="1.300">
  <!-- avatar sticker -->
  <path d="M1.500 9.500a6.500 6.500 0 0 1 13 0c0 2-1.500 4.500-6.500 4.500s-6.500-2.500-6.500-4.500z"/><circle cx="5.700" cy="9.500" r="1.700"/><circle cx="10.300" cy="9.500" r="1.700"/><path d="M2 8c3 0 4-2 6-4 1.500 2 3.500 3.500 6 4"/>
  <!-- emoji -->
  <circle cx="34.500" cy="8.500" r="6.800"/><circle cx="32" cy="6.800" r=".7" fill="#65676b"/><circle cx="37" cy="6.800" r=".7" fill="#65676b"/><path d="M31 10.200c1 1.700 6 1.700 7 0"/>
  <!-- camera -->
  <rect x="53.700" y="4" width="13.600" height="10.500" rx="2.200"/><circle cx="60.500" cy="9.300" r="3"/><path d="M57.500 4l1-1.700h4l1 1.700"/>
  <!-- gif -->
  <rect x="80" y="3" width="14" height="11" rx="2.800"/>
  <!-- sticker -->
  <g transform="rotate(14 112 8.500)"><path d="M108 2.500h7.500a3 3 0 0 1 3 3v4l-5.500 5.500h-5a3 3 0 0 1-3-3v-6.500a3 3 0 0 1 3-3z"/><path d="M118.500 9.500h-3a2.500 2.500 0 0 0-2.500 2.500v3"/><circle cx="108.700" cy="7" r=".7" fill="#65676b"/><circle cx="113.500" cy="7" r=".7" fill="#65676b"/><path d="M108 10c.8 1 2.500 1.200 3.500.3"/></g>
</svg>
<div class="abs" style="left:1079.500px;top:581px;font-size:6.500px;font-weight:bold;color:#65676b;line-height:8px;letter-spacing:.1px">GIF</div>
<svg class="abs" style="left:1226px;top:577px" width="17" height="17" viewBox="0 0 17 17"><path d="M2 2.500l13.500 6L2 14.500l1.800-5 6.200-1-6.200-1z" fill="#bcc0c4"/></svg>
<div id="scroll" class="abs"></div>
<svg class="abs" style="left:1268px;top:85px" width="9" height="6" viewBox="0 0 9 6"><path d="M.8 5l3.700-3.700L8.200 5" stroke="#454545" stroke-width="1.800" fill="none"/></svg>
<svg class="abs" style="left:1268px;top:671px" width="9" height="6" viewBox="0 0 9 6"><path d="M.8 1l3.700 3.700L8.200 1" stroke="#454545" stroke-width="1.800" fill="none"/></svg>

<!-- ======= TASKBAR ======= -->
<div id="taskbar" class="abs"></div>
<div class="abs" style="left:1275px;top:682px;width:1px;height:37px;background:#7b8588"></div>
<!-- start -->
<svg class="abs" style="left:14.500px;top:692.500px" width="16" height="16" viewBox="0 0 16 16" fill="#fff"><path d="M0 2.300l6.500-.9v6.200H0zM7.300 1.300L16 0v7.600H7.300zM0 8.400h6.500v6.200L0 13.700zM7.300 8.400H16V16l-8.700-1.300z"/></svg>
<!-- search box -->
<div class="abs" style="left:45px;top:681.500px;width:270px;height:36px;background:#f2f2f2;border:1px solid #c9cdce;overflow:hidden">
  <svg class="abs" style="left:180px;top:0" width="90" height="36" viewBox="0 0 90 36">
    <defs><filter id="sb"><feGaussianBlur stdDeviation=".35"/></filter><radialGradient id="sg" cx=".45" cy=".4" r=".7"><stop offset="0" stop-color="#d3c2b4"/><stop offset="1" stop-color="#a8917f"/></radialGradient></defs>
    <g filter="url(#sb)">
    <path d="M50 0c2 3 4 6 7 9" stroke="#5a3a22" stroke-width="1.400" fill="none"/>
    <path d="M23 .2C33 .8 45 2.500 59 7.600 66 10.200 72 14 90 26.500V36H84C79 30 75 25.500 70.500 21.500 65 16.500 55 10 43.500 6.300 36 4.300 29 3.300 23 3z" fill="#8a5a2e"/>
    <path d="M24.500 2.500c-1.500 2-2 5-.5 7.500 3-1.500 5-4.500 5.500-7.500-2-.8-3.500-.8-5 0z" fill="#9ccc3c"/>
    <path d="M73.500 17c-.5-3.500.2-7 2-9.800 1.300 2 1.600 4.300 1.300 6.300 1.400-2.200 3-3.700 5.200-4.500-.2 3.800-3 7-8.500 8z" fill="#9ccc3c"/>
    <path d="M36 5c1-3 4-4 6-2.500l-1 5z" fill="#b5a090"/>
    <ellipse cx="48.400" cy="23.600" rx="13.600" ry="10.400" fill="url(#sg)" transform="rotate(14 48.400 23.600)"/>
    <path d="M57 18c2-3 3.500-6.500 4.500-9.500l4.500 2.500c-1 5-3 10-6.500 14z" fill="#ab9483"/>
    <path d="M22 22c2-1.500 4-.5 6 1 3 2 6 2.500 10 2l1 5c-6 2-11 .5-15-3-1.500-1.500-2.500-3-2-5z" fill="#b7a292"/>
    <circle cx="35.400" cy="12.700" r="8.400" fill="#b9a797"/>
    <ellipse cx="34.800" cy="13.600" rx="5.600" ry="4.800" fill="#ddd3c9" transform="rotate(-18 34.800 13.600)"/>
    <ellipse cx="32.300" cy="14.600" rx="1.700" ry="1.400" fill="#5a4a48" transform="rotate(-25 32.300 14.600)"/>
    <ellipse cx="37" cy="13" rx="1.700" ry="1.400" fill="#5a4a48" transform="rotate(-25 37 13)"/>
    </g>
  </svg>
</div>
<svg class="abs" style="left:55px;top:691px" width="18" height="18" viewBox="0 0 18 18" fill="none" stroke="#2b2b2b" stroke-width="1.400"><circle cx="11" cy="7" r="5"/><path d="M7.300 10.700L1.500 16.500"/></svg>
<div class="abs" id="buscar" style="left:83px;top:692.500px;font-size:14.200px;line-height:17px;color:#3a3a3a;white-space:nowrap;transform:scaleX(.9);transform-origin:0 0">Buscar</div>
<!-- task view -->
<svg class="abs" style="left:329px;top:692px" width="17" height="17" viewBox="0 0 17 17" fill="none" stroke="#fff" stroke-width="1.300"><rect x="1.500" y="4.500" width="9.500" height="8"/><path d="M1.500 1h9.500M1.500 16h9.500M14 4.500v8M14 1v1.500M14 14.500V16"/><rect x="13" y="7" width="2" height="3" fill="#fff" stroke="none"/></svg>
<!-- copilot -->
<svg class="abs" style="left:374px;top:689px" width="23" height="22" viewBox="0 0 23 22"><defs><linearGradient id="cp1" x1="0" y1="0" x2="1" y2="1"><stop offset="0" stop-color="#2f8df0"/><stop offset=".45" stop-color="#b05ad8"/><stop offset=".8" stop-color="#f0884a"/><stop offset="1" stop-color="#f5c244"/></linearGradient></defs><path d="M7 1.500h7c2 0 3 1 3.500 3l.7 3c.3 1.300 1 2 2.300 2 1.500 0 2 1.500 1.500 3l-1.500 5c-.6 2-1.800 3-3.800 3h-7c-2 0-3-1-3.500-3l-.7-3c-.3-1.300-1-2-2.300-2C1.700 12.500 1.200 11 1.700 9.500l1.500-5c.6-2 1.800-3 3.800-3z" fill="url(#cp1)"/><path d="M9 6.500h4l2 9h-4z" fill="#fff" opacity=".25"/></svg>
<!-- edge -->
<svg class="abs" style="left:419px;top:689px" width="23" height="23" viewBox="0 0 23 23"><defs><linearGradient id="ed1" x1="0" y1="0" x2="1" y2="1"><stop offset="0" stop-color="#35c1f1"/><stop offset=".5" stop-color="#1b8ad6"/><stop offset="1" stop-color="#0c59a4"/></linearGradient><linearGradient id="ed2" x1="0" y1="0" x2="1" y2="0"><stop offset="0" stop-color="#6ad64a"/><stop offset="1" stop-color="#2fc1d6"/></linearGradient></defs><circle cx="11.500" cy="11.500" r="10.800" fill="url(#ed1)"/><path d="M1 10C2 4 6.500.8 11.500.8c6 0 10.500 4 10.700 9.200-1-3-4-4.500-7-4.500C9 5.500 6 10 6.500 14.500 3 14 1 12.500 1 10z" fill="url(#ed2)"/><path d="M9 11c0-2 1.500-3.500 4-3.500 3 0 5 2 5 4.500 0 1.500-1 3-3 3-2.500 0-3.200-1.500-2.800-2.500C10.500 13 9 12.500 9 11z" fill="#1c2b30" opacity=".55"/></svg>
<!-- explorer -->
<svg class="abs" style="left:465px;top:690px" width="23" height="21" viewBox="0 0 23 21"><path d="M1 2.500h7l2 2.500h12v13H1z" fill="#f5b62f"/><path d="M1 7h21v11.500H1z" fill="#fcd462"/><path d="M6 13h11v6H6z" fill="#3f8fd6"/><path d="M8 15h7v4H8z" fill="#fcd462"/></svg>
<!-- store -->
<svg class="abs" style="left:511px;top:688px" width="23" height="24" viewBox="0 0 23 24"><path d="M7.500 6V4.500a4 4 0 0 1 8 0V6" fill="none" stroke="#49a6e8" stroke-width="1.800"/><rect x="1.500" y="6" width="20" height="16.500" rx="2.500" fill="#f3f3f3"/><rect x="6.800" y="9.800" width="4.200" height="4.200" fill="#f25022"/><rect x="12" y="9.800" width="4.200" height="4.200" fill="#7fba00"/><rect x="6.800" y="15" width="4.200" height="4.200" fill="#00a4ef"/><rect x="12" y="15" width="4.200" height="4.200" fill="#ffb900"/></svg>
<!-- outlook -->
<svg class="abs" style="left:556px;top:689px" width="24" height="23" viewBox="0 0 24 23"><path d="M8 4l8-3.500 7.500 5V19c0 1.500-1 2.500-2.500 2.500H8z" fill="#1e8fe0"/><path d="M8 9l15.500-3.500V19c0 1.500-1 2.500-2.500 2.500H8z" fill="#41b4f2"/><path d="M8 13l15.500 6c0 1.500-1 2.500-2.500 2.500H8z" fill="#1568b8"/><rect x="1" y="6" width="12.500" height="12.500" rx="1.800" fill="#0f62b5"/><circle cx="7.200" cy="12.200" r="3" fill="none" stroke="#fff" stroke-width="1.700"/></svg>
<!-- Ps -->
<div class="abs appsq" style="left:603.500px;background:#0a2a45;color:#39a9ff">Ps</div>
<!-- firefox (active) -->
<div class="abs" style="left:638px;top:681px;width:45px;height:38px;background:#3a474b"></div>
<svg class="abs" style="left:648px;top:687px" width="25" height="25" viewBox="0 0 25 25"><defs><radialGradient id="ff1" cx=".6" cy=".2" r=".9"><stop offset="0" stop-color="#ffe14a"/><stop offset=".35" stop-color="#ff9a2e"/><stop offset=".7" stop-color="#ff4b4b"/><stop offset="1" stop-color="#e2246c"/></radialGradient><radialGradient id="ff2" cx=".5" cy=".4" r=".6"><stop offset="0" stop-color="#9a5cf5"/><stop offset="1" stop-color="#5b2bd6"/></radialGradient></defs><path d="M12.500 2c2 1 3 2.500 3.500 4 1-1.500 1-3 .5-4.500 4 2 7 6 7 11.500 0 6-4.800 11-11.500 11S1 19 1 13c0-3 1-5.500 3-7.500 0 1.500.5 2.500 1.500 3.500C6.500 6 9 3.500 12.500 2z" fill="url(#ff1)"/><circle cx="13" cy="14" r="5.800" fill="url(#ff2)"/><path d="M6 11c2-1.500 5-1 6.500 1-2 0-3 1-3 2.500 0 2 2 3 4 3 3 0 5-2.500 5-5.500 2 5-1 10.500-6.500 10.500S3 17 6 11z" fill="#ff8a2a"/></svg>
<!-- Pr -->
<div class="abs appsq" style="left:695.500px;background:#1a0b6e;color:#a9a7ff">Pr</div>
<!-- VLC -->
<svg class="abs" style="left:740px;top:688px" width="24" height="24" viewBox="0 0 24 24"><path d="M12 1.500c.8 0 1.300.4 1.600 1.200L19 18H5L10.400 2.700c.3-.8.800-1.200 1.600-1.200z" fill="#ff8a14"/><path d="M9.300 6h5.400l1.300 3.800H8zM6.700 13.500h10.600l1 3H5.700z" fill="#f5f5f5"/><path d="M3 18h18l1.500 4.500h-21z" fill="#ff8a14"/></svg>
<!-- Ai -->
<div class="abs appsq" style="left:787.500px;background:#3b0b00;color:#ff9d1e">Ai</div>
<!-- WhatsApp -->
<svg class="abs" style="left:832px;top:688px" width="25" height="25" viewBox="0 0 25 25"><path d="M12.500 1.500a10.500 10.500 0 0 0-9 16l-1.700 5.700 5.900-1.600A10.500 10.500 0 1 0 12.500 1.500z" fill="#2fd366"/><path d="M12.500 3.500a8.500 8.500 0 0 0-7 13.300l-1 3.400 3.500-1A8.500 8.500 0 1 0 12.500 3.500z" fill="#1c2b30"/><path d="M12.500 4.700a7.300 7.300 0 0 0-6 11.500l-.7 2.400 2.500-.7a7.300 7.300 0 1 0 4.200-13.200z" fill="#2fd366"/><path d="M9.500 8c.5 0 .7.200 1 1l.5 1.300c.1.400 0 .7-.3 1l-.4.500c.7 1.300 1.700 2.200 3 2.800l.6-.7c.3-.3.600-.4 1-.2l1.400.7c.5.200.6.500.5 1-.3 1.200-1.400 1.800-2.600 1.600-3.300-.6-6-3.300-6.500-6.500C7.500 9.300 8.300 8 9.500 8z" fill="#fff"/></svg>
<div class="abs" style="left:847px;top:698.500px;width:17px;height:17px;border-radius:50%;background:#30383b;border:1.300px solid #d8dcdd;color:#fff;font-size:9.500px;line-height:14.500px;text-align:center;font-weight:bold;letter-spacing:-0.5px">12</div>
<!-- running underlines -->
<div class="abs ul" style="left:458px;width:37.500px"></div>
<div class="abs ul" style="left:596px;width:37px"></div>
<div class="abs ul" style="left:638px;width:45px"></div>
<div class="abs ul" style="left:688.500px;width:37px"></div>
<div class="abs ul" style="left:779px;width:37px"></div>
<div class="abs ul" style="left:825px;width:36px"></div>
<!-- tray -->
<svg class="abs" style="left:946px;top:687px" width="28" height="24" viewBox="0 0 28 24"><path d="M7 21.500a5 5 0 0 1-.5-10 6.500 6.500 0 0 1 12.300-1.500 5.800 5.800 0 0 1 1.200 11.500z" fill="#a7c4ef"/><path d="M7 21.500a5 5 0 0 1 0-8c3-1 8 1 13 8z" fill="#86aee8" opacity=".7"/><circle cx="18.500" cy="7" r="5.300" fill="#d8262c"/></svg>
<div class="abs" style="left:961px;top:689px;width:7px;font-size:8.500px;line-height:10px;font-weight:bold;color:#fff;text-align:center">2</div>
<div class="abs tray" id="temp" style="left:978px;top:692.500px;font-size:14px;line-height:16px;transform:scaleX(.88);transform-origin:0 0">25°C</div>
<svg class="abs" style="left:1029px;top:696px" width="12" height="8" viewBox="0 0 12 8"><path d="M1 6.800l5-5 5 5" stroke="#fff" stroke-width="1.300" fill="none"/></svg>
<svg class="abs" style="left:1050px;top:691px" width="16" height="19" viewBox="0 0 16 19" fill="none" stroke="#fff" stroke-width="1.100"><rect x="2.500" y="5.500" width="7.500" height="8" rx="1.500"/><path d="M10 8.500l3.500-2v6l-3.500-2M3 3c1.500-1.700 8.500-1.700 10 0M3 16c1.500 1.700 8.500 1.700 10 0"/></svg>
<svg class="abs" style="left:1071px;top:692.500px" width="17" height="15" viewBox="0 0 17 15" fill="none" stroke="#fff" stroke-width="1.100"><path d="M1 5h2.500L7 1.700v11.600L3.500 10H1z"/><path d="M9.500 5a3.500 3.500 0 0 1 0 5M11.700 3a6.500 6.500 0 0 1 0 9M14 1.200a9.500 9.500 0 0 1 0 12.600"/></svg>
<svg class="abs" style="left:1095px;top:692px" width="17" height="16" viewBox="0 0 17 16" fill="none" stroke="#fff" stroke-width="1.100"><rect x=".8" y=".8" width="14" height="11"/><path d="M4 9l3-3 2 2 3-4M9 4h3v3"/><circle cx="12.500" cy="12" r="3.300" fill="#f59a23" stroke="none"/></svg>
<svg class="abs" style="left:1117px;top:692.500px" width="17" height="15" viewBox="0 0 17 15" fill="none" stroke="#fff" stroke-width="1.100"><rect x="4" y=".8" width="12" height="8.500"/><path d="M10 9.300v3.200M6 13.500h8M1 .8h2v6H1z"/></svg>
<div class="abs tray" id="esp" style="left:1144.500px;top:693.500px;font-size:11.300px;transform:scaleX(.75);transform-origin:0 0">ESP</div>
<div class="abs tray" id="clock" style="left:1173px;top:684px;width:54px;text-align:center;font-size:11.600px;letter-spacing:-0.3px;transform:scaleX(.86)">10:32</div>
<div class="abs tray" id="date" style="left:1166.500px;top:701px;width:68px;text-align:center;font-size:11.600px;letter-spacing:-0.3px;transform:scaleX(.985)">20/10/2025</div>
<svg class="abs" style="left:1241px;top:691px" width="17" height="17" viewBox="0 0 17 17"><path d="M1 1h15v11.500H8L4.500 16v-3.500H1z" fill="#fff"/><path d="M3.500 4h10M3.500 6.700h10M3.500 9.400h10" stroke="#1c2b30" stroke-width="1"/></svg>
<div class="abs" style="left:1247px;top:699px;width:17px;height:17px;border-radius:50%;background:#30383b;border:1.300px solid #d8dcdd;color:#fff;font-size:9.500px;line-height:14.500px;text-align:center;font-weight:bold;letter-spacing:-0.5px">21</div>

</div>
</body>
</html>
